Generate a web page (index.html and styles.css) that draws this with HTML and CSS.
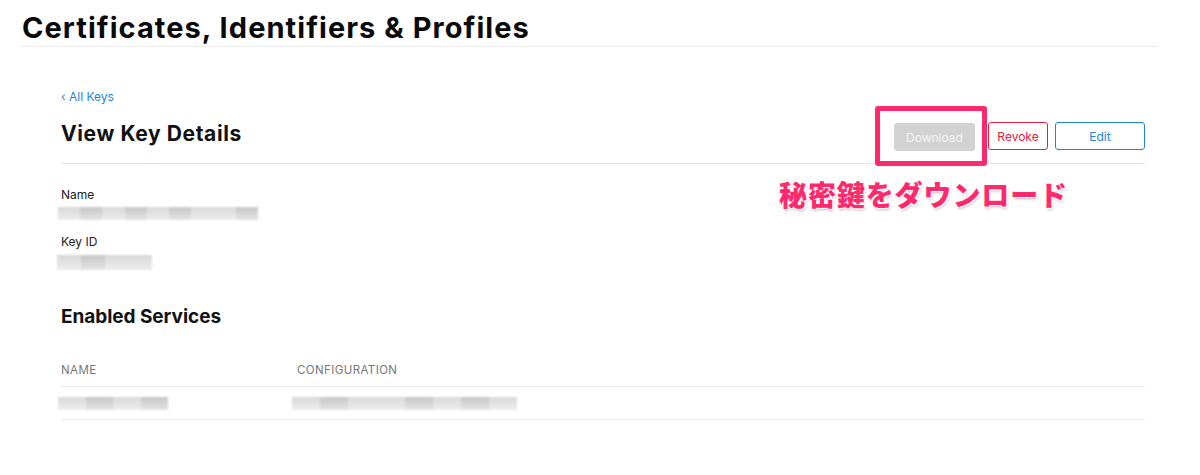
FILE: index.html
```html
<!DOCTYPE html>
<html lang="ja">
<head>
<meta charset="utf-8">
<link rel="stylesheet" href="styles.css">
</head>
<body>
<header class="top">
  <h1 class="brand">Certificates, Identifiers &amp; Profiles</h1>
</header>
<main class="content">
  <a class="back" href="#">&#8249; All Keys</a>
  <div class="titlebar">
    <h2 class="title">View Key Details</h2>
    <div class="actions">
      <div class="highlight">
        <button class="btn btn-download">Download</button>
      </div>
      <button class="btn btn-revoke">Revoke</button>
      <button class="btn btn-edit">Edit</button>
    </div>
    <div class="callout">秘密鍵をダウンロード</div>
  </div>
  <section class="details">
    <div class="field">
      <div class="label">Name</div>
      <div class="blur blur-name"><span></span><span class="d"></span><span></span><span class="d"></span><span></span><span class="d"></span><span></span><span></span><span class="d"></span></div>
    </div>
    <div class="field">
      <div class="label">Key ID</div>
      <div class="blur blur-id"><span></span><span class="d"></span><span></span><span></span></div>
    </div>
  </section>
  <h3 class="section-title">Enabled Services</h3>
  <div class="table">
    <div class="row head">
      <div class="col c1">NAME</div>
      <div class="col c2">CONFIGURATION</div>
    </div>
    <div class="row body">
      <div class="col c1"><div class="blur blur-svc"><span></span><span class="d"></span><span></span><span class="d"></span></div></div>
      <div class="col c2"><div class="blur blur-conf"><span></span><span class="d"></span><span></span><span></span><span class="d"></span><span></span><span class="d"></span><span></span></div></div>
    </div>
  </div>
</main>
</body>
</html>
```
FILE: styles.css
```css
* { box-sizing: border-box; }
html, body { margin: 0; padding: 0; background: #fff; }
body {
  font-family: Inter, "Noto Sans", "Liberation Sans", "Noto Sans CJK JP", sans-serif;
  color: #111;
  width: 1200px;
  height: 475px;
  overflow: hidden;
}
.top {
  margin: 0 42px 0 20px;
  border-bottom: 1px solid #ececec;
  height: 47px;
  padding-left: 2px;
}
.brand {
  margin: 0;
  padding-top: 11px;
  font-size: 29px;
  line-height: 34px;
  font-weight: 700;
  letter-spacing: 1.05px;
  color: #0a0a0a;
}
.content {
  margin: 0 55px 0 61px;
  padding-top: 42px;
}
.back {
  display: block;
  font-size: 12px;
  line-height: 15px;
  color: #1f86d6;
  text-decoration: none;
}
.titlebar {
  position: relative;
  display: flex;
  justify-content: space-between;
  align-items: center;
  height: 60px;
  border-bottom: 1px solid #e3e3e3;
}
.title {
  margin: 0;
  font-size: 21px;
  font-weight: 700;
  letter-spacing: 0.6px;
  color: #111;
}
.actions {
  display: flex;
  align-items: center;
  gap: 7px;
  align-self: flex-start;
  margin-top: 2px;
}
.highlight {
  padding: 12px 7px 10px 14px;
  border: 5px solid #ff2a6d;
  border-radius: 3px;
  margin-right: -6px;
  position: relative;
  z-index: 1;
  background: #fff;
}
.btn {
  font-family: inherit;
  font-size: 12px;
  height: 28px;
  border-radius: 3px;
  background: #fff;
  padding: 0;
  cursor: pointer;
}
.btn-download {
  width: 81px;
  border: 1px solid #d2d2d2;
  background: #d2d2d2;
  color: #f2f2f2;
  display: block;
}
.btn-revoke {
  width: 60px;
  border: 1px solid #e3203c;
  color: #e3203c;
}
.btn-edit {
  width: 90px;
  border: 1px solid #1f86d6;
  color: #1f86d6;
}
.callout {
  position: absolute;
  left: 718px;
  top: 70px;
  font-family: "Noto Sans CJK JP", sans-serif;
  font-size: 28px;
  line-height: 40px;
  font-weight: 900;
  color: #ff2a6d;
  letter-spacing: 0.9px;
  text-shadow: 1px 1px 0 #fff, -1px -1px 0 #fff, 1px -1px 0 #fff, -1px 1px 0 #fff, 1px 2px 3px rgba(0,0,0,0.25);
  white-space: nowrap;
}
.details {
  padding-top: 23px;
}
.label {
  font-size: 12px;
  line-height: 15px;
  color: #222;
}
.blur {
  display: flex;
  height: 13px;
  margin-top: 5px;
  filter: blur(1.2px);
  opacity: 0.75;
}
.blur span {
  flex: 1;
  background: linear-gradient(#cdcdcd, #e8e8e8);
}
.blur span.d { background: linear-gradient(#b5b5b5, #dcdcdc); }
.blur-name { width: 200px; margin-left: -3px; margin-bottom: 14px; }
.blur-id { width: 95px; margin-left: -4px; margin-top: 6px; height: 15px; }
.section-title {
  margin: 35px 0 0;
  font-size: 19px;
  line-height: 23px;
  font-weight: 700;
  letter-spacing: -0.05px;
  color: #111;
}
.table { margin-top: 35px; }
.row {
  display: flex;
  align-items: center;
  border-bottom: 1px solid #eaeaea;
}
.row.head { height: 24px; align-items: flex-start; }
.row.body { height: 33px; }
.col.c1 { width: 236px; }
.col.c2 { flex: 1; }
.head .col {
  font-size: 11.5px;
  line-height: 14px;
  color: #777;
  letter-spacing: 0.4px;
}
.blur-svc { width: 110px; margin-left: -3px; margin-top: 0; }
.blur-conf { width: 225px; margin-left: -5px; margin-top: 0; }
```
